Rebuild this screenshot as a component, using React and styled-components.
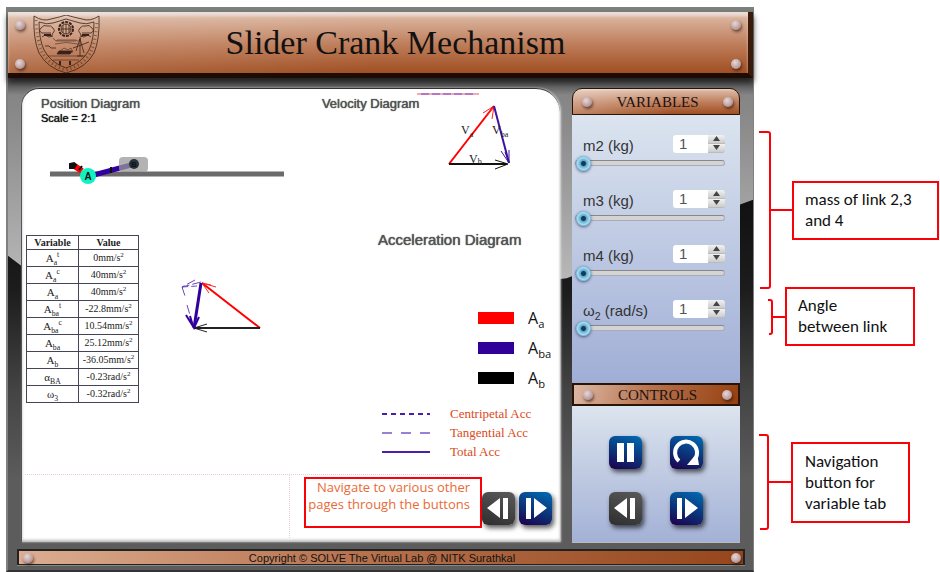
import React, { useState } from "react";
import styled, { createGlobalStyle, css } from "styled-components";

const sans = '"Liberation Sans", Arial, sans-serif';
const serif = '"Liberation Serif", "Times New Roman", serif';
const comic = '"Comic Sans MS", "Open Sans", sans-serif';

const GlobalStyle = createGlobalStyle`
  *, *::before, *::after { box-sizing: border-box; }
  body { margin: 0; background: #fff; font-family: ${sans}; color: #222; }
  button, input { font: inherit; margin: 0; padding: 0; border: 0; }
  h1, h2, h3, p { margin: 0; font-weight: 400; }
  svg { display: block; flex: none; }
  sub, sup { font-size: 70%; line-height: 0; }
`;

const Page = styled.div`
  display: grid;
  grid-template-columns: minmax(0, 1fr) 186px;
  align-items: start;
  padding: 7px 0 0 6px;
`;

const Lab = styled.main`
  position: relative;
  isolation: isolate;
  border: 2px solid #7d827e;
  border-right-width: 1px;
  border-bottom-color: #333;
  background: linear-gradient(#7d827e 0 3px, #444 70px, #858585 86px, #8c8c8c 120px, #c0c0c0 300px);

  &::before {
    content: "";
    position: absolute;
    inset: 0;
    z-index: -1;
    background: linear-gradient(#111 34%, #1c1c1c 50%, #444 68%, #5c5c5c 84%);
    clip-path: polygon(0 44%, 2% 46%, 50% 52%, 75% 48%, 98% 36%, 98% 35%, 100% 34%, 100% 100%, 0 100%);
  }
`;

const copper = "linear-gradient(#e6d2c8 0, #d9b29b 10%, #bd7b58 55%, #a04f22 100%)";

const Rivet = styled.i`
  flex: none;
  width: 10px;
  height: 10px;
  border-radius: 50%;
  background: radial-gradient(circle at 40% 35%, #e8d8d8, #bba0a0 60%, #8a6a66);
  box-shadow: 1px 2px 3px rgba(40, 10, 0, 0.6);
`;

const Header = styled.header`
  display: flex;
  align-items: center;
  height: 66px;
  margin-top: 3px;
  padding: 4px 7px 0 7px;
  border-right: 5px solid #3a1a0a;
  border-bottom: 5px solid #1c0c04;
  background: linear-gradient(100deg, rgba(255, 255, 255, 0.15), transparent 50%), ${copper};
  box-shadow: inset 0 4px 3px rgba(240, 232, 228, 0.6), 0 4px 6px #222;
`;

const RivetPair = styled.div`
  display: flex;
  flex-direction: column;
  gap: 29px;
`;

const Title = styled.h1`
  flex: 1;
  padding: 0 40px 4px 0;
  text-align: center;
  font: 34px/40px ${serif};
  color: #111;
`;

const Emblem = styled.svg`
  margin-left: 8px;
`;

const Body = styled.div`
  display: flex;
  gap: 12px;
  margin: 10px 13px 0 13px;
`;

const Board = styled.section`
  flex: 1;
  min-width: 0;
  border-top: 1px solid #333;
  border-left: 1px solid #555;
  border-radius: 18px 24px 0 0;
  background: #fff;
  box-shadow: inset 0 -2px 3px #bbb, 1px 0 2px #ddd;
`;

const TopDiagrams = styled.div`
  display: grid;
  grid-template-columns: 5fr 4fr;
  height: 142px;
`;

const DiagramTitle = styled.h2`
  font: ${(p) => (p.$large ? "15px/18px" : "13px/16px")} ${sans};
  color: #555;
  text-shadow: 0 0 1px #222;
  white-space: nowrap;
`;

const PositionSection = styled.section`
  padding: 7px 0 0 19px;
`;

const Scale = styled.p`
  font: 11px/13px ${sans};
  color: #111;
  text-shadow: 0 0 1px #000;
`;

const PositionDrawing = styled.svg`
  margin: 28px 0 0 8px;
`;

const VelocitySection = styled.section`
  display: grid;
  justify-items: start;
  align-items: start;
  padding-left: 1px;

  > * { grid-area: 1 / 1; }
  > h2 { padding-top: 7px; }
  > svg { margin-left: 94px; }
`;

const LowerDiagrams = styled.div`
  display: flex;
  align-items: flex-start;
  height: 243px;
  padding-left: 4px;
`;

const ValueTable = styled.table`
  margin-top: 4px;
  border-collapse: collapse;
  text-align: center;
  font: 10px/14px ${serif};
  color: #222;

  th, td { border: 1px solid #445; padding: 0; height: 17px; }
  th { height: 14px; line-height: 13px; font-weight: 700; }
  th:first-child, td:first-child { width: 52px; }
  th:last-child, td:last-child { width: 60px; }
  td:first-child { font-size: 11px; }
`;

const AccelerationDrawing = styled.svg`
  margin: 46px 0 0 40px;
`;

const AccelerationSection = styled.section`
  width: 182px;
  margin-left: auto;
`;

const VectorLegend = styled.ul`
  list-style: none;
  margin: 54px 0 11px 100px;
  padding: 0;

  li { display: flex; align-items: center; gap: 14px; height: 30px; font: 16px/20px ${comic}; color: #111; }
`;

const Swatch = styled.i`
  width: 36px;
  height: 12px;
  background: ${(p) => p.$color};
`;

const LineLegend = styled.ul`
  list-style: none;
  margin: 0 0 0 4px;
  padding: 0;

  li { display: flex; align-items: center; gap: 19px; height: 19px; font: 13px/16px ${serif}; color: #dc4a20; }
`;

const DottedRule = styled.hr`
  height: 0;
  margin: 0 90px 0 3px;
  border: 0;
  border-top: 1px dotted #e6d0d6;
`;

const BoardFooter = styled.div`
  display: flex;
  align-items: flex-start;
  height: 67px;
  padding: 0 8px 0 0;
`;

const BlankCell = styled.div`
  flex: 1;
  align-self: stretch;
  margin: 0 14px 4px 0;
  border-right: 1px dotted #e6d0d6;
`;

const Hint = styled.p`
  width: 178px;
  height: 51px;
  margin-top: 2px;
  padding: 0 10px 0 0;
  border: 2px solid #fb0007;
  text-align: right;
  white-space: nowrap;
  font: 13px/17px ${comic};
  color: #ea6a35;
`;

const PageButtons = styled.div`
  display: flex;
  gap: 4px;
  margin-top: 17px;
`;

const Square = styled.button`
  display: grid;
  place-items: center;
  width: 33px;
  height: 33px;
  border-radius: 6px;
  cursor: pointer;
  background: ${(p) =>
    p.$muted ? "linear-gradient(20deg, #2e2e2e, #5a5a5a)" : "linear-gradient(20deg, #1c0450 5%, #0c3278 45%, #006cb4)"};
  box-shadow: 2px 3px 5px rgba(0, 0, 0, 0.65);
`;

const Sidebar = styled.aside`
  display: flex;
  flex-direction: column;
  width: 168px;
`;

const SideHeader = styled.h2`
  display: flex;
  align-items: center;
  justify-content: space-between;
  padding: 0 6px 0 9px;
  font: 15px/20px ${serif};
  color: #1a1210;
  border: 1px solid #2a1408;
  background: linear-gradient(90deg, rgba(255, 255, 255, 0.3), transparent 60%), ${copper};

  ${(p) =>
    p.$top
      ? css`
          height: 27px;
          border-radius: 10px 10px 0 0;
        `
      : css`
          height: 23px;
          border-width: 2px;
          background: linear-gradient(105deg, #dcb8a4, #b87450 45%, #96400f);
        `}
`;

const VariableList = styled.div`
  height: 268px;
  padding: 19px 15px 0 3px;
  background: linear-gradient(#dbe4ef, #a0aed6);
`;

const Variable = styled.div`
  display: grid;
  grid-template-columns: 1fr auto;
  align-items: center;
  height: 55px;
  align-content: start;
`;

const VariableLabel = styled.label`
  padding: 3px 0 0 8px;
  font: 15px/18px ${sans};
  color: #333;
`;

const Spinner = styled.div`
  display: grid;
  grid-template-columns: 35px 17px;
  grid-template-rows: 9px 9px;
  gap: 0;
  margin-bottom: 2px;

  input {
    grid-row: 1 / 3;
    width: 35px;
    padding-left: 6px;
    border-radius: 3px 0 0 3px;
    background: #fff;
    font: 15px/18px ${sans};
    color: #555;
  }
`;

const Step = styled.button`
  display: grid;
  place-items: center;
  background: linear-gradient(#f2f2f2, #ccc);
  border-bottom: 1px solid #bbb;
  border-radius: ${(p) => (p.$down ? "0 0 3px 0" : "0 3px 0 0")};
`;

const Slider = styled.input`
  grid-column: 1 / 3;
  appearance: none;
  width: 100%;
  height: 16px;
  background: transparent;

  &::-webkit-slider-runnable-track {
    height: 6px;
    border: 1px solid #aab;
    border-top-color: #888;
    border-radius: 3px;
    background: #d4d4d4;
  }
  &::-webkit-slider-thumb {
    appearance: none;
    width: 15px;
    height: 15px;
    margin-top: -5px;
    border-radius: 50%;
    background: radial-gradient(circle, #123c58 0 2px, #5fa8cc 3px, #a8dcf0 6px, #5aa0c4 8px);
    box-shadow: 0 1px 3px rgba(20, 40, 80, 0.7);
  }
`;

const Controls = styled.div`
  flex: 1;
  display: grid;
  grid-template-columns: 33px 33px;
  grid-auto-rows: 33px;
  justify-content: center;
  gap: 23px 28px;
  padding: 30px 0 16px;
  background: linear-gradient(#dce4ee, #a3b1d6);
  box-shadow: 0 1px 0 #bbb;
`;

const Footer = styled.footer`
  display: flex;
  align-items: center;
  justify-content: space-between;
  height: 16px;
  margin: 7px 8px 5px 9px;
  padding: 0 2px 0 4px;
  border: 2px solid #222;
  border-bottom-width: 1px;
  background: linear-gradient(95deg, #dcae92, #b87450 45%, #96461c);
  box-shadow: 0 1px 0 #888;
  font: 11px/12px ${sans};
  color: #111;
`;

const Notes = styled.aside`
  display: flex;
  flex-direction: column;
  padding: 124px 0 0 5px;
`;

const Note = styled.div`
  display: flex;
  align-items: center;
  margin-top: ${(p) => p.$gap || 0}px;
  padding-left: ${(p) => p.$indent || 0}px;

  p {
    width: ${(p) => p.$width}px;
    border: 2px solid #fb0007;
    padding: ${(p) => (p.$tall ? "7px 0 7px 12px" : "6px 0 7px 11px")};
    font: 17px/21px Calibri, Carlito, "Noto Sans", sans-serif;
    color: #111;
    white-space: pre-line;
  }
`;

const scrollPath = "M8 13 q3 -4 6 -2 q4 -1 6 2 q3 3 0 5 l-2 4 M8 13 q-3 3 1 5 h9 M9 22 l3 -2 4 2 4 -1";

function NitkEmblem() {
  return (
    <Emblem width="67" height="59" viewBox="0 0 67 59" fill="none" stroke="#3a2218" strokeWidth=".8" role="img" aria-label="NITK emblem">
      <path d="M1 1 Q10 7 18 4 Q27 2 33 0 Q40 2 49 4 Q57 7 66 1 Q67 24 61 38 Q53 53 33 58 Q14 53 6 38 Q0 24 1 1Z" />
      <path d="M6 7 Q14 10 20 8 L33 4 L47 8 Q53 10 61 7 Q61 24 56 35 Q49 48 33 53 Q18 48 11 35 Q6 24 6 7Z" />
      <path d="M3 5 Q4 25 9 37 Q16 50 33 55 Q51 50 58 37 Q63 25 64 5" strokeWidth="3" strokeDasharray="1 3" opacity=".5" />
      <circle cx="33" cy="14" r="7" strokeWidth="2" strokeDasharray="3 1" />
      <circle cx="33" cy="14" r="5" />
      <path d="M33 9v10M30 10v8M36 10v8M28 14h10" />
      <path d={scrollPath} />
      <path d={scrollPath} transform="translate(67 0) scale(-1 1)" />
      <path d="M11 20h7M49 20h7" strokeWidth="2" />
      <path d="M20 23 q4 5 4 2 h19 q2 3 5 -2 M22 29 q11 -3 23 0 M24 26h19" opacity=".7" />
      <path d="M12 31h4l2 2h5M47 22v19M44 41h8M40 33l16-6M47 24l-4 12M47 24l4 14" />
      <path d="M26 37l5-4 4 2 3-2 2 4zM15 41h35M20 45h26" opacity=".7" />
      <path d="M26 36h13l-2 3H24z" fill="#3a2218" />
      <path d="M27 46v4M37 46v4" strokeWidth="2" />
    </Emblem>
  );
}

const PauseIcon = () => (
  <svg width="25" height="25" viewBox="0 0 25 25" fill="#fff">
    <path d="M4 3h7v19H4zM14 3h7v19h-7z" />
  </svg>
);
const RestartIcon = () => (
  <svg width="29" height="27" viewBox="0 0 29 27">
    <path d="M7 22A11 11 0 1 1 23 20" fill="none" stroke="#fff" strokeWidth="4" />
    <path d="M15 26L27 26 25 14Z" fill="#fff" />
  </svg>
);
const PrevIcon = () => (
  <svg width="27" height="25" viewBox="0 0 27 25" fill="#fff">
    <path d="M2 12L15 2V22ZM18 2h5v21h-5z" />
  </svg>
);
const NextIcon = () => (
  <svg width="27" height="25" viewBox="0 0 27 25" fill="#fff">
    <path d="M25 12L12 2V22ZM4 2h5v21H4z" />
  </svg>
);

function PositionFigure() {
  return (
    <PositionDrawing width="236" height="34" viewBox="49 153 236 34">
      <path d="M50 174H284" stroke="#6b6b6b" strokeWidth="5" />
      <path d="M73 165L82 171" stroke="#f00" strokeWidth="6" />
      <path d="M90 176L131 165" stroke="#32009c" strokeWidth="5" />
      <path d="M70 164l4-1 2 2-2 3h-4zM79 170l3-4M111 167v6" fill="#111" stroke="#111" strokeWidth="2" />
      <rect x="119" y="157" width="29" height="15" rx="4" fill="#999" fillOpacity=".75" />
      <circle cx="134" cy="164" r="5" fill="#26323c" />
      <circle cx="88" cy="176" r="8" fill="#10f2c2" />
      <g fontFamily="Liberation Sans" fontWeight="700" textAnchor="middle" fill="#111">
        <text x="88" y="180" fontSize="10">A</text>
        <text x="134" y="167" fontSize="8">B</text>
      </g>
    </PositionDrawing>
  );
}

function VelocityFigure() {
  return (
    <svg width="102" height="84" viewBox="416 89 102 84" fill="none">
      <path d="M417 94H479" stroke="#f0506a" />
      <path d="M421 94H474" stroke="#7048d8" strokeDasharray="8 3" />
      <path d="M449 164L494 106" stroke="#f00" strokeWidth="2" />
      <path d="M483 113L494 106L492 119M486 117L494 106" stroke="#f22" />
      <path d="M494 106L509 163" stroke="#3b12a0" strokeWidth="2" />
      <path d="M501 151L509 163L509 150M505 152L509 163" stroke="#3b12a0" />
      <path d="M449 164H507" stroke="#111" strokeWidth="2" />
      <path d="M495 160L508 164L495 169" stroke="#111" />
      <g fill="#222" fontFamily="Liberation Serif" fontSize="12">
        <text x="461" y="134">V<tspan fontSize="8" dy="3">a</tspan></text>
        <text x="492" y="134">V<tspan fontSize="8" dy="3">ba</tspan></text>
        <text x="469" y="163">V<tspan fontSize="8" dy="1">b</tspan></text>
      </g>
    </svg>
  );
}

function AccelerationFigure() {
  return (
    <AccelerationDrawing width="84" height="56" viewBox="179 277 84 56" fill="none">
      <path d="M260 328L202 283" stroke="#f00" strokeWidth="2" />
      <path d="M216 287L202 283L209 293M211 285L202 283" stroke="#f22" />
      <path d="M260 328H194" stroke="#222" strokeWidth="2" />
      <path d="M207 324L194 328L207 332" stroke="#222" />
      <path d="M201 283L194 328" stroke="#32009c" strokeWidth="3" />
      <path d="M186 315L194 328L199 317M190 316L193 326" stroke="#32009c" strokeWidth="2" />
      <path d="M201 282L182 287M195 280L182 287L197 286M182 287L185 296M187 305L190 315" stroke="#6a48bc" strokeWidth="1" strokeDasharray="9 3" />
    </AccelerationDrawing>
  );
}

const unit = (n, u) => <>{n}{u}/s<sup>2</sup></>;
const tableRows = [
  [<>A<sub>a</sub><sup>t</sup></>, unit("0", "mm")],
  [<>A<sub>a</sub><sup>c</sup></>, unit("40", "mm")],
  [<>A<sub>a</sub></>, unit("40", "mm")],
  [<>A<sub>ba</sub><sup>t</sup></>, unit("-22.8", "mm")],
  [<>A<sub>ba</sub><sup>c</sup></>, unit("10.54", "mm")],
  [<>A<sub>ba</sub></>, unit("25.12", "mm")],
  [<>A<sub>b</sub></>, unit("-36.05", "mm")],
  [<>α<sub>BA</sub></>, unit("-0.23", "rad")],
  [<>ω<sub>3</sub></>, unit("-0.32", "rad")],
];

const vectors = [
  ["a", "#ff0000"],
  ["ba", "#320099"],
  ["b", "#000000"],
];

const lineStyles = [
  ["Centripetal Acc", "5 4", "#4a1fae", 2],
  ["Tangential Acc", "10 9", "#9a80d4", 2],
  ["Total Acc", undefined, "#4a1fae", 2],
];

const variables = [
  ["m2", "m2 (kg)"],
  ["m3", "m3 (kg)"],
  ["m4", "m4 (kg)"],
  ["w2", <>ω<sub>2</sub> (rad/s)</>],
];

function VariableControl({ id, label }) {
  const [value, setValue] = useState(1);
  const set = (n) => setValue(Math.min(10, Math.max(1, Number(n) || 1)));
  return (
    <Variable>
      <VariableLabel id={`${id}-label`} htmlFor={id}>{label}</VariableLabel>
      <Spinner>
        <input id={id} type="text" inputMode="numeric" value={value} onChange={(e) => set(e.target.value)} />
        <Step type="button" aria-label="Increase" onClick={() => set(value + 1)}>
          <svg width="7" height="5" viewBox="0 0 7 5"><path d="M0 5L3.500 0 7 5Z" fill="#444" /></svg>
        </Step>
        <Step type="button" $down aria-label="Decrease" onClick={() => set(value - 1)}>
          <svg width="7" height="5" viewBox="0 0 7 5"><path d="M0 0L3.500 5 7 0Z" fill="#444" /></svg>
        </Step>
      </Spinner>
      <Slider type="range" min="1" max="10" value={value} aria-labelledby={`${id}-label`} onChange={(e) => set(e.target.value)} />
    </Variable>
  );
}

function Bracket({ width, height, spine }) {
  return (
    <svg width={width} height={height} viewBox={`0 0 ${width} ${height}`} fill="none" stroke="#fb0007" strokeWidth="2">
      <path d={`M0 1H${spine - 2}Q${spine} 1 ${spine} 3V${height - 3}Q${spine} ${height - 1} ${spine - 2} ${height - 1}H1M${spine} ${height / 2}H${width}`} />
    </svg>
  );
}

export default function App() {
  return (
    <Page>
      <GlobalStyle />
      <Lab>
        <Header>
          <RivetPair><Rivet /><Rivet /></RivetPair>
          <NitkEmblem />
          <Title>Slider Crank Mechanism</Title>
          <RivetPair><Rivet /><Rivet /></RivetPair>
        </Header>
        <Body>
          <Board>
            <TopDiagrams>
              <PositionSection>
                <DiagramTitle>Position Diagram</DiagramTitle>
                <Scale>Scale = 2:1</Scale>
                <PositionFigure />
              </PositionSection>
              <VelocitySection>
                <DiagramTitle>Velocity Diagram</DiagramTitle>
                <VelocityFigure />
              </VelocitySection>
            </TopDiagrams>
            <LowerDiagrams>
              <ValueTable>
                <thead><tr><th>Variable</th><th>Value</th></tr></thead>
                <tbody>
                  {tableRows.map(([name, value], i) => (
                    <tr key={i}><td>{name}</td><td>{value}</td></tr>
                  ))}
                </tbody>
              </ValueTable>
              <AccelerationFigure />
              <AccelerationSection>
                <DiagramTitle $large>Acceleration Diagram</DiagramTitle>
                <VectorLegend>
                  {vectors.map(([name, color]) => (
                    <li key={name}><Swatch $color={color} /><span>A<sub>{name}</sub></span></li>
                  ))}
                </VectorLegend>
                <LineLegend>
                  {lineStyles.map(([name, dash, color, weight]) => (
                    <li key={name}>
                      <svg width="49" height="4" viewBox="0 0 49 4">
                        <path d="M0 2H48" stroke={color} strokeWidth={weight} strokeDasharray={dash} />
                      </svg>
                      {name}
                    </li>
                  ))}
                </LineLegend>
              </AccelerationSection>
            </LowerDiagrams>
            <DottedRule />
            <BoardFooter>
              <BlankCell />
              <Hint>Navigate to various other<br />pages through the buttons</Hint>
              <PageButtons>
                <Square type="button" $muted aria-label="Previous page"><PrevIcon /></Square>
                <Square type="button" aria-label="Next page"><NextIcon /></Square>
              </PageButtons>
            </BoardFooter>
          </Board>
          <Sidebar>
            <SideHeader $top><Rivet />VARIABLES<Rivet /></SideHeader>
            <VariableList>
              {variables.map(([id, label]) => <VariableControl key={id} id={id} label={label} />)}
            </VariableList>
            <SideHeader><Rivet />CONTROLS<Rivet /></SideHeader>
            <Controls>
              <Square type="button" aria-label="Pause"><PauseIcon /></Square>
              <Square type="button" aria-label="Restart"><RestartIcon /></Square>
              <Square type="button" $muted aria-label="Step back"><PrevIcon /></Square>
              <Square type="button" aria-label="Step forward"><NextIcon /></Square>
            </Controls>
          </Sidebar>
        </Body>
        <Footer><Rivet />Copyright © SOLVE The Virtual Lab @ NITK Surathkal<Rivet /></Footer>
      </Lab>
      <Notes>
        <Note $width={147}>
          <Bracket width={33} height={158} spine={11} />
          <p>{"mass of link 2,3\nand 4"}</p>
        </Note>
        <Note $width={130} $indent={9} $gap={-2}>
          <Bracket width={17} height={36} spine={4} />
          <p>{"Angle\nbetween link"}</p>
        </Note>
        <Note $width={119} $gap={88} $tall>
          <Bracket width={32} height={96} spine={9} />
          <p>{"Navigation\nbutton for\nvariable tab"}</p>
        </Note>
      </Notes>
    </Page>
  );
}
